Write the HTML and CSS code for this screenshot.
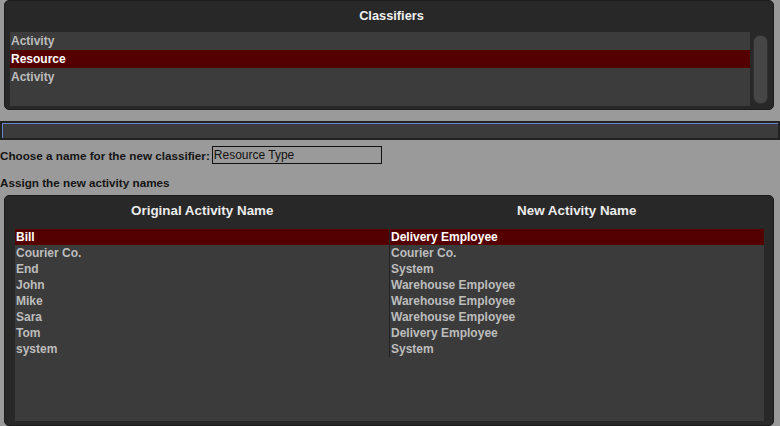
FILE: index.html
```html
<!DOCTYPE html>
<html>
<head>
<meta charset="utf-8">
<link rel="stylesheet" href="styles.css">
</head>
<body>
<div class="panel top-panel">
  <div class="panel-title">Classifiers</div>
  <div class="list-row">
    <ul class="list">
      <li>Activity</li>
      <li class="sel">Resource</li>
      <li>Activity</li>
    </ul>
    <div class="scroll"><div class="thumb"></div></div>
  </div>
</div>
<div class="bar"></div>
<div class="name-row">
  <span class="label">Choose a name for the new classifier:</span>
  <div class="input">Resource Type</div>
</div>
<div class="label assign">Assign the new activity names</div>
<div class="panel bottom-panel">
  <div class="head">
    <div class="hcell">Original Activity Name</div>
    <div class="hcell">New Activity Name</div>
  </div>
  <div class="table">
    <div class="trow sel"><div class="c1">Bill</div><div class="c2">Delivery Employee</div></div>
    <div class="trow"><div class="c1">Courier Co.</div><div class="c2">Courier Co.</div></div>
    <div class="trow"><div class="c1">End</div><div class="c2">System</div></div>
    <div class="trow"><div class="c1">John</div><div class="c2">Warehouse Employee</div></div>
    <div class="trow"><div class="c1">Mike</div><div class="c2">Warehouse Employee</div></div>
    <div class="trow"><div class="c1">Sara</div><div class="c2">Warehouse Employee</div></div>
    <div class="trow"><div class="c1">Tom</div><div class="c2">Delivery Employee</div></div>
    <div class="trow"><div class="c1">system</div><div class="c2">System</div></div>
  </div>
</div>
</body>
</html>
```

FILE: styles.css
```css
html, body {
  margin: 0;
  padding: 0;
  background: #9a9a9a;
  font-family: "Liberation Sans", Arial, sans-serif;
  overflow: hidden;
}
.panel {
  background: #282828;
  border: 1px solid #1c1c1c;
  border-radius: 5px;
  box-sizing: border-box;
  margin: 0 6px 0 4px;
}
.top-panel {
  height: 110px;
  padding: 0 0 0 5px;
}
.panel-title {
  height: 31px;
  line-height: 29px;
  text-align: center;
  color: #f0f0f0;
  font-weight: bold;
  font-size: 12.8px;
}
.list-row {
  display: flex;
  align-items: flex-start;
}
.list {
  list-style: none;
  margin: 0;
  padding: 0;
  width: 740px;
  height: 74px;
  background: #3c3c3c;
}
.list li {
  height: 18px;
  line-height: 18px;
  padding-left: 1px;
  font-size: 12px;
  font-weight: bold;
  color: #bdbdbd;
}
.list li.sel, .trow.sel {
  background: #550000;
  color: #ffffff;
}
.scroll {
  margin-left: 3px;
  padding-top: 3px;
}
.thumb {
  width: 13px;
  height: 67px;
  background: #464646;
  border: 1px solid #303030;
  border-radius: 7px;
}
.bar {
  margin-top: 11px;
  height: 19px;
  box-sizing: border-box;
  background: #3b3b3b;
  border: 2px solid #222222;
  box-shadow: inset 1px 1px 0 #6a84cc;
}
.name-row {
  display: flex;
  align-items: center;
  margin-top: 6px;
  height: 18px;
}
.label {
  font-size: 11.7px;
  font-weight: bold;
  color: #151515;
}
.input {
  margin-left: 2px;
  width: 170px;
  height: 18px;
  box-sizing: border-box;
  border: 1px solid #111;
  font-size: 12px;
  line-height: 16px;
  padding-left: 1px;
  color: #111;
}
.assign {
  margin-top: 12px;
  line-height: 13px;
}
.bottom-panel {
  margin-top: 6px;
  height: 231px;
  padding: 0 9px 0 10px;
}
.head {
  display: flex;
  height: 33px;
}
.hcell {
  flex: 1;
  text-align: center;
  line-height: 30px;
  color: #ececec;
  font-weight: bold;
  font-size: 13.4px;
}
.table {
  background: #3b3b3b;
  height: 192px;
}
.trow {
  display: flex;
  height: 16px;
  line-height: 16px;
  font-size: 12px;
  font-weight: bold;
  color: #bdbdbd;
}
.c1 {
  width: 374px;
  padding-left: 1px;
  box-sizing: border-box;
}
.c2 {
  flex: 1;
  border-left: 1px solid #222;
  padding-left: 1px;
}
```
